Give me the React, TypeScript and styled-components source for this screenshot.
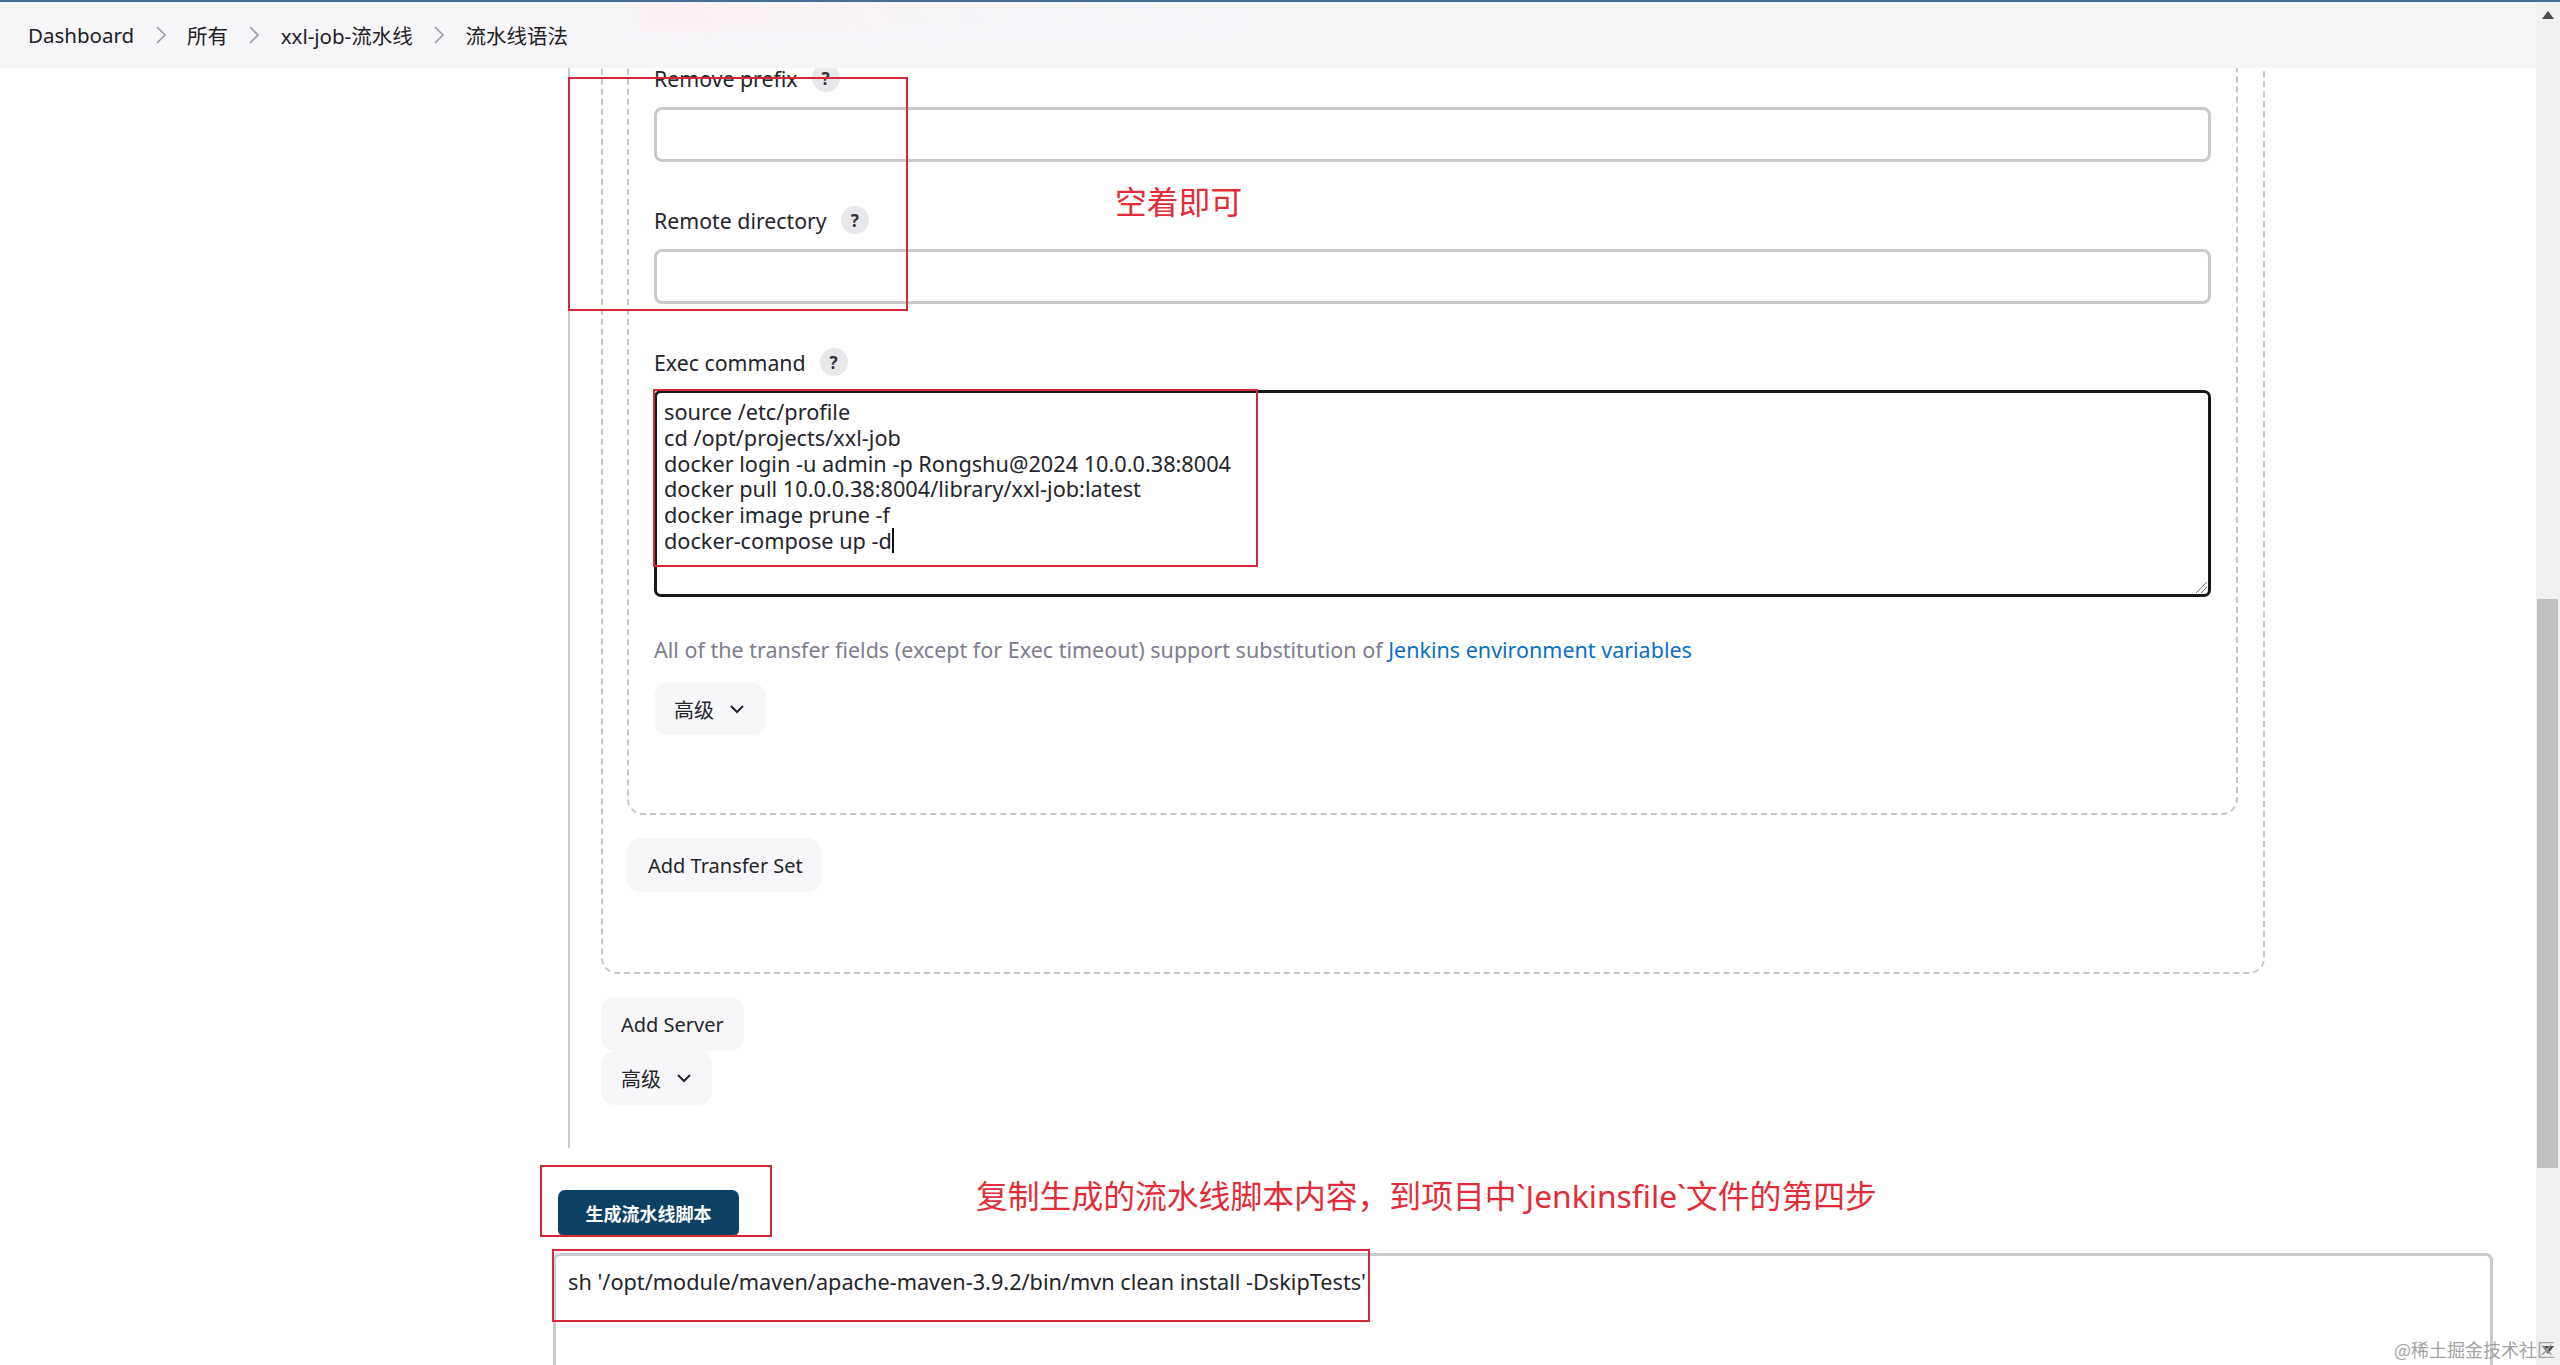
import React from "react";
import styled, { createGlobalStyle } from "styled-components";

const Global = createGlobalStyle`
  html, body { margin: 0; padding: 0; background: #fff; }
  body { font-family: "Noto Sans", "Noto Sans CJK SC", sans-serif; color: #1f2024; }
  * { box-sizing: border-box; }
`;

const Screen = styled.div`
  position: relative;
  display: flex;
  width: 2560px;
  height: 1365px;
  overflow: hidden;
  background: #fff;
  border-top: 2px solid #4a6f96;
`;
const Main = styled.main`
  position: relative;
  flex: 1;
  min-width: 0;
  display: flex;
  flex-direction: column;
`;
const Breadcrumbs = styled.nav`
  position: relative;
  z-index: 2;
  flex: none;
  height: 66px;
  display: flex;
  align-items: center;
  padding: 0 0 0 28px;
  background: #f6f6f9;
  font-size: 20.5px;
`;
const Smear = styled.div`
  position: absolute;
  left: 640px;
  top: 0;
  width: 640px;
  height: 30px;
  background: linear-gradient(90deg, rgba(251, 236, 239, 0.8), rgba(247, 242, 245, 0.6) 40%, rgba(246, 246, 249, 0));
  filter: blur(6px);
`;
const Crumb = styled.span``;
const CrumbSep = styled.svg`
  flex: none;
  width: 12px;
  height: 22px;
  margin: 0 20.4px;
`;
const Content = styled.div`
  flex: 1;
  display: flex;
  flex-direction: column;
  padding-left: 568px;
  margin-top: -4px;
`;
const FormColumn = styled.section`
  flex: none;
  width: 1740px;
  height: 1084px;
  padding-left: 31px;
  border-left: 2px solid #c8c8c8;
`;
const DashedOuter = styled.div`
  width: 1664px;
  height: 910px;
  padding-left: 24px;
  border: 2px dashed #c6c6c6;
  border-top: none;
  border-radius: 0 0 16px 16px;
`;
const DashedInner = styled.div`
  width: 1611px;
  height: 751px;
  padding: 0 25px 0 25px;
  border: 2px dashed #c6c6c6;
  border-top: none;
  border-radius: 0 0 16px 16px;
`;
const Label = styled.div<{ $gap: number }>`
  display: flex;
  align-items: center;
  gap: 14px;
  height: 30px;
  padding-bottom: 2px;
  margin-top: ${(p) => p.$gap}px;
  font-size: 21.3px;
  color: #24252b;
`;
const Help = styled.span`
  display: flex;
  align-items: center;
  justify-content: center;
  width: 28px;
  height: 28px;
  border-radius: 50%;
  background: #e8e8ea;
  font-size: 17px;
  font-weight: 700;
  color: #33343a;
`;
const TextField = styled.div`
  height: 55px;
  margin-top: 13px;
  border: 3px solid #c8caca;
  border-radius: 8px;
  background: #fff;
`;
const CommandBox = styled.div`
  position: relative;
  height: 207px;
  margin-top: 12px;
  padding: 6px 7px;
  border: 3px solid #17181b;
  border-radius: 7px;
  font-size: 21.7px;
  line-height: 25.8px;
  color: #24252b;
  white-space: pre;
`;
const Caret = styled.span`
  display: inline-block;
  width: 2px;
  height: 25px;
  vertical-align: top;
  background: #111;
`;
const ResizeGrip = styled.svg`
  position: absolute;
  right: 0;
  bottom: 0;
  width: 14px;
  height: 14px;
`;
const Hint = styled.p`
  margin: 38px 0 0;
  height: 30px;
  line-height: 30px;
  font-size: 21.5px;
  color: #7d7d8e;
`;
const HintLink = styled.a`
  color: #0b6fc2;
`;
const GhostButton = styled.button<{ $w: number; $h?: number; $top?: number; $pad?: number }>`
  display: flex;
  align-items: center;
  gap: 14px;
  width: ${(p) => p.$w}px;
  height: ${(p) => p.$h ?? 54}px;
  margin: ${(p) => p.$top ?? 0}px 0 0;
  padding: 0 0 0 ${(p) => p.$pad ?? 20}px;
  border: none;
  border-radius: 14px;
  background: #f7f7fa;
  font-family: inherit;
  font-size: 20px;
  color: #24252b;
`;
const Chevron = styled.svg`
  width: 18px;
  height: 18px;
`;
const SubmitRow = styled.div`
  flex: none;
  margin: 42px 0 0 -10px;
`;
const PrimaryButton = styled.button`
  display: block;
  width: 181px;
  height: 47px;
  padding: 0;
  border: none;
  border-bottom: 2px solid #8a4a6a;
  border-radius: 7px;
  background: #0b4164;
  color: #fff;
  font-family: inherit;
  font-size: 18px;
  font-weight: 700;
`;
const ScriptBox = styled.div`
  flex: none;
  width: 1940px;
  height: 200px;
  margin: 16px 0 0 -15px;
  padding: 11px 12px;
  border: 3px solid #c8cccc;
  border-radius: 7px;
  font-size: 21.7px;
  line-height: 30px;
  color: #24252b;
  white-space: pre;
`;
const Scrollbar = styled.aside`
  flex: none;
  width: 24px;
  display: flex;
  flex-direction: column;
  background: #f0f0f0;
`;
const ScrollSpace = styled.div<{ $h?: number }>`
  height: ${(p) => (p.$h ? `${p.$h}px` : "auto")};
  flex: ${(p) => (p.$h ? "none" : "1")};
  display: flex;
  justify-content: center;
`;
const Thumb = styled.div`
  flex: none;
  height: 569px;
  margin-left: 1px;
  width: 21px;
  background: #c0c0c0;
`;
const Arrow = styled.svg<{ $top: number }>`
  width: 12px;
  height: 8px;
  margin-top: ${(p) => p.$top}px;
`;
const RedBox = styled.div<{ $x: number; $y: number; $w: number; $h: number }>`
  position: absolute;
  z-index: 3;
  left: ${(p) => p.$x}px;
  top: ${(p) => p.$y}px;
  width: ${(p) => p.$w}px;
  height: ${(p) => p.$h}px;
  border: 2px solid #cf2a35;
  pointer-events: none;
`;
const Note = styled.div<{ $x: number; $y: number; $size: number }>`
  position: absolute;
  z-index: 3;
  left: ${(p) => p.$x}px;
  top: ${(p) => p.$y}px;
  font-size: ${(p) => p.$size}px;
  line-height: 1.2;
  color: #e22c37;
  white-space: nowrap;
`;
const Watermark = styled.div`
  position: absolute;
  z-index: 4;
  left: 2394px;
  top: 1336px;
  font-family: "Noto Sans CJK SC", sans-serif;
  font-size: 18px;
  line-height: 22px;
  color: #a2a2a2;
  white-space: nowrap;
`;

const Sep = () => (
  <CrumbSep viewBox="0 0 12 22" fill="none" stroke="#9a9aa2" strokeWidth="1.6">
    <path d="M2 3l8 8-8 8" />
  </CrumbSep>
);
const Down = () => (
  <Chevron viewBox="0 0 18 18" fill="none" stroke="#24252b" strokeWidth="2">
    <path d="M3 6l6 6 6-6" />
  </Chevron>
);

const commands = [
  "source /etc/profile",
  "cd /opt/projects/xxl-job",
  "docker login -u admin -p Rongshu@2024 10.0.0.38:8004",
  "docker pull 10.0.0.38:8004/library/xxl-job:latest",
  "docker image prune -f",
  "docker-compose up -d",
].join("\n");

export default function App() {
  return (
    <>
      <Global />
      <Screen>
        <Main>
          <Breadcrumbs>
            <Smear />
            <Crumb>Dashboard</Crumb>
            <Sep />
            <Crumb>所有</Crumb>
            <Sep />
            <Crumb>xxl-job-流水线</Crumb>
            <Sep />
            <Crumb>流水线语法</Crumb>
          </Breadcrumbs>
          <Content>
            <FormColumn>
              <DashedOuter>
                <DashedInner>
                  <Label $gap={0}>
                    Remove prefix <Help>?</Help>
                  </Label>
                  <TextField />
                  <Label $gap={44}>
                    Remote directory <Help>?</Help>
                  </Label>
                  <TextField />
                  <Label $gap={44}>
                    Exec command <Help>?</Help>
                  </Label>
                  <CommandBox>
                    {commands}
                    <Caret />
                    <ResizeGrip viewBox="0 0 14 14" fill="none" stroke="#777" strokeWidth="1">
                      <path d="M2 13L13 2M7 13l6-6" />
                    </ResizeGrip>
                  </CommandBox>
                  <Hint>
                    All of the transfer fields (except for Exec timeout) support substitution of{" "}
                    <HintLink>Jenkins environment variables</HintLink>
                  </Hint>
                  <GhostButton $w={112} $h={52} $top={18}>
                    高级 <Down />
                  </GhostButton>
                </DashedInner>
                <GhostButton $w={194} $top={23} $pad={21}>
                  Add Transfer Set
                </GhostButton>
              </DashedOuter>
              <GhostButton $w={143} $top={23}>
                Add Server
              </GhostButton>
              <GhostButton $w={111}>
                高级 <Down />
              </GhostButton>
            </FormColumn>
            <SubmitRow>
              <PrimaryButton>生成流水线脚本</PrimaryButton>
            </SubmitRow>
            <ScriptBox>sh '/opt/module/maven/apache-maven-3.9.2/bin/mvn clean install -DskipTests'</ScriptBox>
          </Content>
        </Main>
        <Scrollbar>
          <ScrollSpace $h={597}>
            <Arrow $top={9} viewBox="0 0 12 8" fill="#4a4a4a">
              <path d="M6 0l6 8H0z" />
            </Arrow>
          </ScrollSpace>
          <Thumb />
          <ScrollSpace>
            <Arrow $top={178} viewBox="0 0 12 8" fill="#4a4a4a">
              <path d="M0 0h12L6 8z" />
            </Arrow>
          </ScrollSpace>
        </Scrollbar>
        <RedBox $x={568} $y={75} $w={340} $h={234} />
        <RedBox $x={653} $y={387} $w={605} $h={178} />
        <RedBox $x={540} $y={1163} $w={232} $h={72} />
        <RedBox $x={552} $y={1247} $w={818} $h={73} />
        <Note $x={1115} $y={181} $size={31.8}>空着即可</Note>
        <Note $x={976} $y={1175} $size={31.8}>复制生成的流水线脚本内容，到项目中`Jenkinsfile`文件的第四步</Note>
        <Watermark>@稀土掘金技术社区</Watermark>
      </Screen>
    </>
  );
}
